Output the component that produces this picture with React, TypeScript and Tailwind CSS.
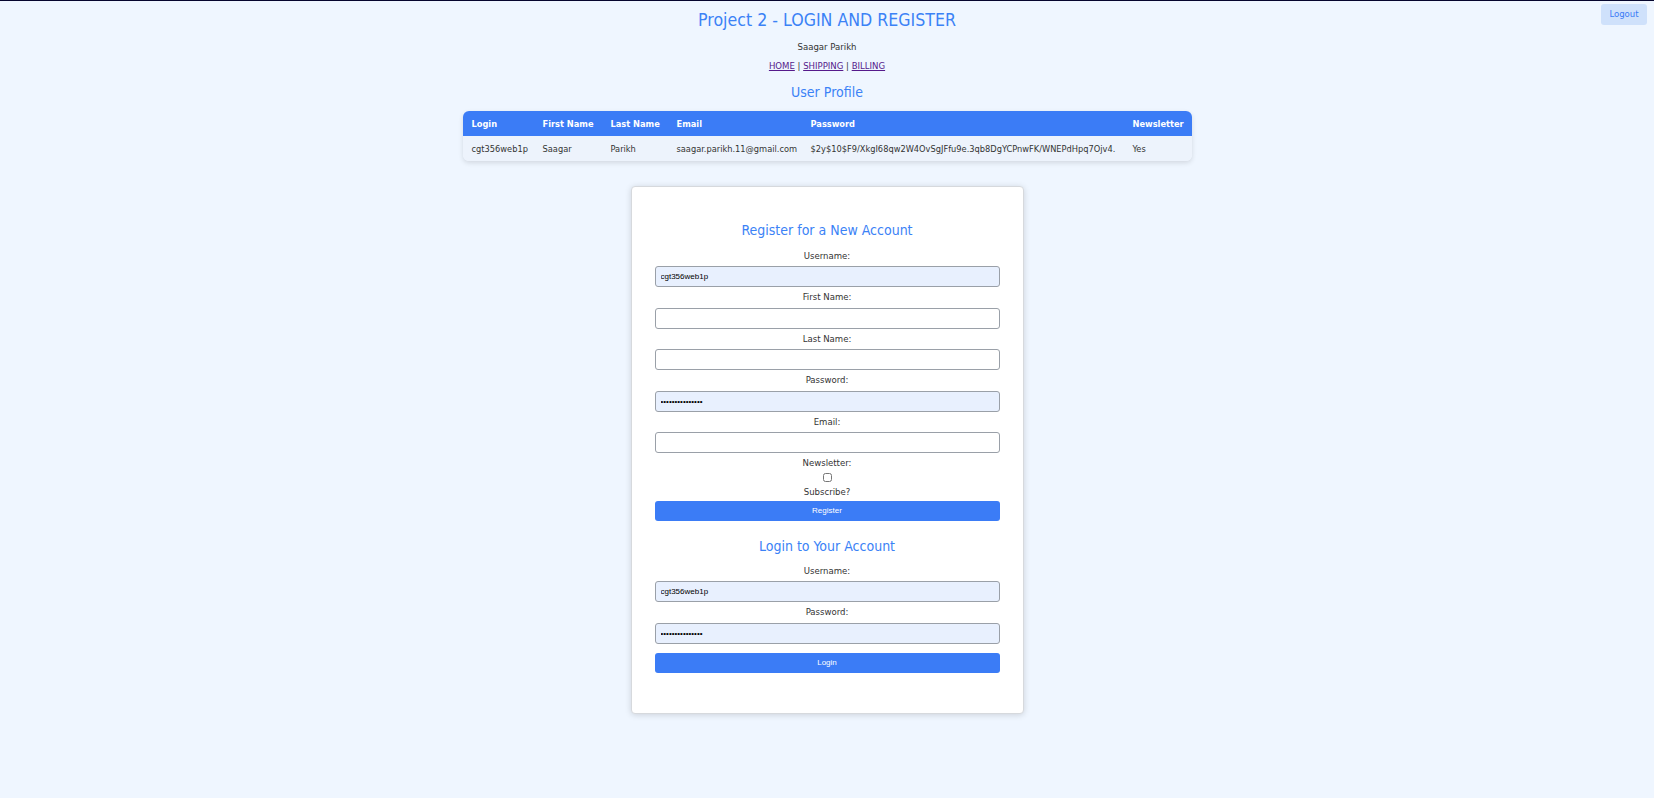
import React from "react";

const font = { fontFamily: '"DejaVu Sans Condensed", "DejaVu Sans", sans-serif' };

function Field({ label, value, type = "text", filled = false }: { label: string; value?: string; type?: string; filled?: boolean }) {
  return (
    <div className="flex flex-col items-center">
      <label className="text-[9.5px] leading-[20.4px] text-[#333]">{label}</label>
      <input
        type={type}
        defaultValue={value}
        readOnly
        className={`block h-[21px] w-full rounded-[3px] border border-[#9aa0a8] px-[5px] text-[8px] font-normal text-black outline-none [font-stretch:normal] [font-family:'Liberation_Sans',Arial,sans-serif] ${filled ? "bg-[#e8f0fe]" : "bg-white"}`}
      />
    </div>
  );
}

export default function App() {
  const pw = "$2y$10$F9/XkgI68qw2W4OvSgJFfu9e.3qb8DgYCPnwFK/WNEPdHpq7Ojv4.";
  return (
    <div className="relative min-h-[798px] w-full border-t border-[#05052e] bg-[#eff6ff] text-[#333] [font-stretch:condensed]" style={font}>
      <button className="absolute right-[7px] top-[3px] h-[21px] w-[46px] rounded-[3px] bg-[#cfe1fb] text-[9.5px] text-[#3b7cf6]">
        Logout
      </button>
      <div className="flex flex-col items-center">
        <h1 className="mt-[9px] text-[17.6px] leading-[20px] text-[#3b82f6]">Project 2 - LOGIN AND REGISTER</h1>
        <p className="mt-[10px] text-[9.5px] leading-[14px]">Saagar Parikh</p>
        <nav className="mt-[5px] text-[9.5px] leading-[14px]">
          <a href="#" className="text-[#551a8b] underline">HOME</a>
          <span> | </span>
          <a href="#" className="text-[#551a8b] underline">SHIPPING</a>
          <span> | </span>
          <a href="#" className="text-[#551a8b] underline">BILLING</a>
        </nav>
        <h2 className="mt-[9px] text-[14px] leading-[20px] text-[#3b82f6]">User Profile</h2>

        <div className="mt-[9px] w-[729px] overflow-hidden rounded-[6px] shadow-[0_2px_5px_rgba(0,0,0,0.12)]">
          <table className="w-full table-fixed border-collapse text-left text-[9.2px]">
            <colgroup>
              <col className="w-[72px]" />
              <col className="w-[68px]" />
              <col className="w-[66px]" />
              <col className="w-[134px]" />
              <col className="w-[322px]" />
              <col className="w-[67px]" />
            </colgroup>
            <thead>
              <tr className="h-[25px] bg-[#3b7cf6] text-white">
                <th className="pl-[9px] font-bold">Login</th>
                <th className="pl-[8px] font-bold">First Name</th>
                <th className="pl-[8px] font-bold">Last Name</th>
                <th className="pl-[8px] font-bold">Email</th>
                <th className="pl-[8px] font-bold">Password</th>
                <th className="pl-[8px] font-bold">Newsletter</th>
              </tr>
            </thead>
            <tbody>
              <tr className="h-[25px] bg-[#edf3fc]">
                <td className="pl-[9px] pt-[1px]">cgt356web1p</td>
                <td className="pl-[8px] pt-[1px]">Saagar</td>
                <td className="pl-[8px] pt-[1px]">Parikh</td>
                <td className="whitespace-nowrap pl-[8px] pt-[1px]">saagar.parikh.11@gmail.com</td>
                <td className="whitespace-nowrap pl-[8px] pt-[1px]">{pw}</td>
                <td className="pl-[8px] pt-[1px]">Yes</td>
              </tr>
            </tbody>
          </table>
        </div>

        <div className="mb-[20px] mt-[25px] w-[393px] rounded-[4px] border border-[#d6d9dd] bg-white px-[23px] pb-[40px] pt-[24px] shadow-[0_1px_6px_rgba(0,0,0,0.15)]">
          <h2 className="mb-[6px] mt-[9px] text-center text-[14px] leading-[20px] text-[#3b82f6]">Register for a New Account</h2>
          <Field label="Username:" value="cgt356web1p" filled />
          <Field label="First Name:" />
          <Field label="Last Name:" />
          <Field label="Password:" type="password" value="password1234567" filled />
          <Field label="Email:" />
          <div className="flex flex-col items-center">
            <span className="text-[9.5px] leading-[20px]">Newsletter:</span>
            <input type="checkbox" className="block h-[9px] w-[9px]" />
            <span className="text-[9.5px] leading-[19px]">Subscribe?</span>
          </div>
          <button className="block h-[20px] w-full rounded-[3px] bg-[#3b7cf6] text-[8px] text-white [font-stretch:normal] [font-family:'Liberation_Sans',Arial,sans-serif]">
            Register
          </button>

          <h2 className="mb-[5px] mt-[15px] text-center text-[14px] leading-[20px] text-[#3b82f6]">Login to Your Account</h2>
          <Field label="Username:" value="cgt356web1p" filled />
          <Field label="Password:" type="password" value="password1234567" filled />
          <button className="mt-[9px] block h-[20px] w-full rounded-[3px] bg-[#3b7cf6] text-[8px] text-white [font-stretch:normal] [font-family:'Liberation_Sans',Arial,sans-serif]">
            Login
          </button>
        </div>
      </div>
    </div>
  );
}
